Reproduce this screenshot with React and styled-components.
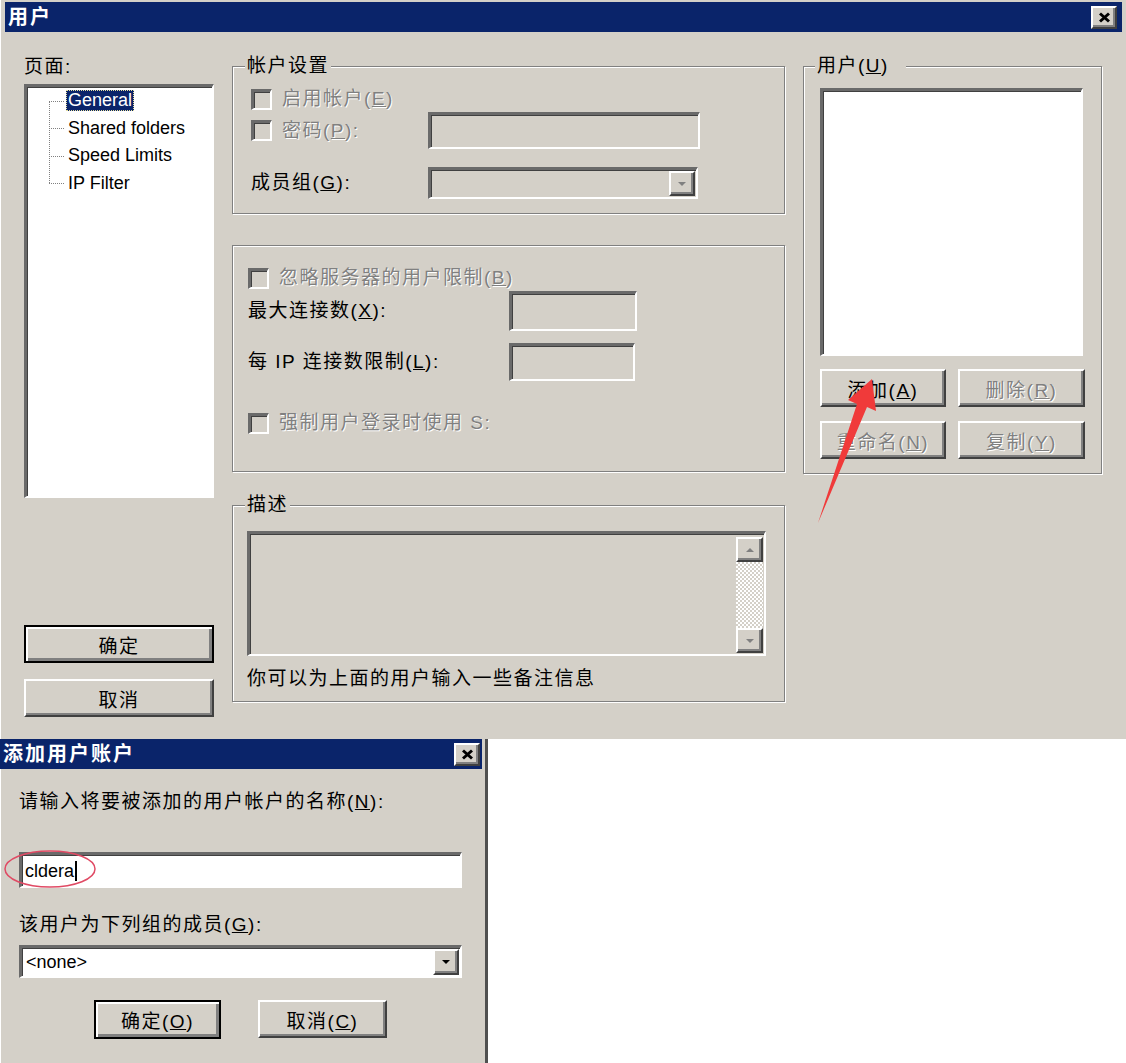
import React from 'react';
import styled, { createGlobalStyle, css } from 'styled-components';

const FACE = '#d4d0c8';
const NAVY = '#0a246a';

const GlobalStyle = createGlobalStyle`
  html, body { margin: 0; padding: 0; background: #fff; overflow: hidden; }
  body {
    font-family: "Liberation Sans", "Noto Sans CJK SC", sans-serif;
    font-size: 19px;
    color: #000;
  }
  * { box-sizing: border-box; }
`;

const sunken = css`
  border-style: solid;
  border-width: 3px 2px 2px 3px;
  border-color: #6a6a6a #fff #fff #6a6a6a;
  box-shadow: inset 1px 1px 0 #404040;
`;

const raised = css`
  border-style: solid;
  border-width: 2px;
  border-color: #fff #404040 #404040 #fff;
  box-shadow: inset -2px -2px 0 #808080;
`;

const dimText = css`
  color: #808080;
  text-shadow: 1px 1px 0 #fff;
`;

const Window = styled.div`
  position: relative;
  width: ${p => p.$w}px;
  height: ${p => p.$h}px;
  background: ${FACE};
  padding: ${p => p.$pad};
  display: flex;
  flex-direction: column;
  box-shadow: inset 1px 0 0 #fff;
  ${p => p.$edge && css`border-right: 3px solid #505050;`}
`;

const TitleBar = styled.div`
  flex: none;
  height: 30px;
  background: ${NAVY};
  display: flex;
  align-items: center;
  justify-content: space-between;
  padding: 0 ${p => p.$right}px 0 3px;
`;

const TitleText = styled.span`
  color: #fff;
  font-weight: bold;
  font-size: 20px;
  letter-spacing: 2px;
  line-height: 30px;
`;

const CloseButton = styled.div`
  width: 26px;
  height: 23px;
  background: ${FACE};
  ${raised}
  display: flex;
  align-items: center;
  justify-content: center;
`;

const MainBody = styled.div`
  flex: 1;
  display: grid;
  grid-template-columns: 190px 553px 299px;
  column-gap: 18px;
  align-items: start;
  padding: 24px 20px 0 19px;
`;

const Column = styled.div`
  display: flex;
  flex-direction: column;
`;

const Text = styled.span`
  display: inline-block;
  line-height: ${p => p.$lh || 22}px;
  letter-spacing: 1.5px;
  white-space: nowrap;
  ${p => p.$w && css`width: ${p.$w}px; flex: none;`}
  ${p => p.$dim && dimText}
`;

const Tree = styled.div`
  margin-top: 6px;
  height: 414px;
  background: #fff;
  ${sunken}
`;

const TreeList = styled.ul`
  position: relative;
  list-style: none;
  margin: 0;
  padding: 0 0 0 39px;
  &::before {
    content: '';
    position: absolute;
    left: 22px;
    top: 14px;
    bottom: 14px;
    border-left: 1px dotted #808080;
  }
`;

const TreeItem = styled.li`
  position: relative;
  height: 27.5px;
  display: flex;
  align-items: center;
  &::before {
    content: '';
    position: absolute;
    left: -17px;
    width: 15px;
    top: 50%;
    border-top: 1px dotted #808080;
  }
`;

const TreeLabel = styled.span`
  font-size: 18px;
  line-height: 21px;
  padding: 0 2px;
  ${p => p.$selected && css`
    background: ${NAVY};
    color: #fff;
    outline: 1px dotted #e8e0a0;
    outline-offset: -1px;
  `}
`;

const LeftButtons = styled.div`
  margin-top: 127px;
  display: flex;
  flex-direction: column;
  gap: 16px;
`;

const PushButton = styled.button`
  width: ${p => p.$w}px;
  height: ${p => p.$h || 38}px;
  padding: 0;
  font: inherit;
  font-size: 19px;
  letter-spacing: 1.5px;
  color: #000;
  background: ${FACE};
  ${raised}
  ${p => p.$default && css`
    border: 2px solid #000;
    box-shadow: inset 2px 2px 0 #fff, inset -3px -3px 0 #808080;
  `}
  &:disabled { ${dimText} }
`;

const Group = styled.div`
  position: relative;
  margin-top: ${p => p.$mt}px;
  height: ${p => p.$h}px;
  padding: ${p => p.$pad};
  border: 1px solid #808080;
  box-shadow: inset 1px 1px 0 #fff, 1px 1px 0 #fff;
`;

const Legend = styled.span`
  position: absolute;
  top: -12px;
  left: ${p => p.$left || 12}px;
  padding: 0 ${p => p.$padR || 2}px 0 2px;
  background: ${FACE};
  line-height: 22px;
  letter-spacing: 1.5px;
`;

const CheckRow = styled.div`
  display: flex;
  align-items: center;
  gap: 10px;
  height: 22px;
  margin-top: ${p => p.$mt || 0}px;
  ${p => p.$w && css`width: ${p.$w}px; flex: none;`}
`;

const CheckBox = styled.span`
  flex: none;
  width: 21px;
  height: 21px;
  background: ${FACE};
  ${sunken}
`;

const FieldRow = styled.div`
  display: flex;
  align-items: center;
  margin-top: ${p => p.$mt || 0}px;
`;

const Field = styled.div`
  flex: none;
  width: ${p => p.$w}px;
  height: ${p => p.$h}px;
  background: ${p => (p.$white ? '#fff' : FACE)};
  ${sunken}
`;

const Combo = styled(Field)`
  display: flex;
  align-items: stretch;
  justify-content: space-between;
  padding: 1px 1px 1px 0;
`;

const ComboValue = styled.span`
  font-size: 18px;
  line-height: 26px;
  padding-left: 4px;
`;

const DropButton = styled.span`
  flex: none;
  width: 26px;
  background: ${FACE};
  ${raised}
  display: flex;
  align-items: center;
  justify-content: center;
`;

const Arrow = styled.span`
  width: 0;
  height: 0;
  border-left: 4px solid transparent;
  border-right: 4px solid transparent;
  ${p => (p.$up
    ? css`border-bottom: 4px solid ${p.$color};`
    : css`border-top: 4px solid ${p.$color};`)}
`;

const TextArea = styled.div`
  width: 519px;
  height: 125px;
  background: ${FACE};
  ${sunken}
  display: flex;
  justify-content: flex-end;
  padding: 3px 1px 1px 0;
`;

const ScrollBar = styled.div`
  width: 27px;
  display: flex;
  flex-direction: column;
`;

const ScrollArrow = styled.span`
  flex: none;
  height: 25px;
  background: ${FACE};
  ${raised}
  display: flex;
  align-items: center;
  justify-content: center;
`;

const ScrollTrack = styled.span`
  flex: 1;
  background-color: #fff;
  background-image: conic-gradient(${FACE} 25%, #fff 0 50%, ${FACE} 0 75%, #fff 0);
  background-size: 4px 4px;
`;

const Note = styled(Text)`
  margin-top: 11px;
  line-height: 24px;
`;

const UserList = styled.div`
  width: 263px;
  height: 268px;
  background: #fff;
  ${sunken}
`;

const ButtonGrid = styled.div`
  margin-top: 13px;
  display: grid;
  grid-template-columns: 126px 127px;
  column-gap: 12px;
  row-gap: 14px;
`;

const Overlay = styled.svg`
  position: absolute;
  left: 0;
  top: 0;
  pointer-events: none;
  overflow: visible;
`;

const DialogBody = styled.div`
  display: flex;
  flex-direction: column;
  align-items: flex-start;
  padding: 22px 0 0 19px;
`;

const NameInput = styled(Field)`
  position: relative;
  margin-top: 39px;
  display: flex;
  align-items: center;
  padding-left: 3px;
`;

const InputText = styled.span`
  font-size: 18px;
  line-height: 22px;
`;

const Caret = styled.span`
  width: 2px;
  height: 20px;
  margin-left: 1px;
  background: #000;
`;

const DialogButtons = styled.div`
  margin-top: 22px;
  padding-left: 75px;
  display: flex;
  align-items: flex-start;
  gap: 37px;
`;

const CloseX = () => (
  <svg width="13" height="11" viewBox="0 0 13 11">
    <path d="M2 1.5 L11 9.5 M11 1.5 L2 9.5" stroke="#000" strokeWidth="3" />
  </svg>
);

const pages = ['General', 'Shared folders', 'Speed Limits', 'IP Filter'];

export default function App() {
  return (
    <>
      <GlobalStyle />
      <Window $w={1126} $h={739} $pad="2px 4px 0 5px">
        <TitleBar $right={5}>
          <TitleText>用户</TitleText>
          <CloseButton><CloseX /></CloseButton>
        </TitleBar>
        <MainBody>
          <Column>
            <Text>页面:</Text>
            <Tree>
              <TreeList>
                {pages.map((p, i) => (
                  <TreeItem key={p}>
                    <TreeLabel $selected={i === 0}>{p}</TreeLabel>
                  </TreeItem>
                ))}
              </TreeList>
            </Tree>
            <LeftButtons>
              <PushButton $w={190} $default>确定</PushButton>
              <PushButton $w={190}>取消</PushButton>
            </LeftButtons>
          </Column>

          <Column>
            <Group $mt={10} $h={148} $pad="21px 0 0 18px">
              <Legend>帐户设置</Legend>
              <CheckRow>
                <CheckBox />
                <Text $dim>启用帐户(<u>E</u>)</Text>
              </CheckRow>
              <FieldRow $mt={2}>
                <CheckRow $w={177}>
                  <CheckBox />
                  <Text $dim>密码(<u>P</u>):</Text>
                </CheckRow>
                <Field $w={272} $h={37} />
              </FieldRow>
              <FieldRow $mt={18}>
                <Text $w={177}>成员组(<u>G</u>):</Text>
                <Combo $w={270} $h={32}>
                  <ComboValue />
                  <DropButton><Arrow $color="#808080" /></DropButton>
                </Combo>
              </FieldRow>
            </Group>

            <Group $mt={31} $h={227} $pad="21px 0 0 15px">
              <CheckRow>
                <CheckBox />
                <Text $dim>忽略服务器的用户限制(<u>B</u>)</Text>
              </CheckRow>
              <FieldRow $mt={2}>
                <Text $w={261}>最大连接数(<u>X</u>):</Text>
                <Field $w={128} $h={40} />
              </FieldRow>
              <FieldRow $mt={12}>
                <Text $w={261}>每 IP 连接数限制(<u>L</u>):</Text>
                <Field $w={126} $h={38} />
              </FieldRow>
              <CheckRow $mt={31}>
                <CheckBox />
                <Text $dim>强制用户登录时使用 S:</Text>
              </CheckRow>
            </Group>

            <Group $mt={33} $h={197} $pad="25px 0 0 14px">
              <Legend>描述</Legend>
              <TextArea>
                <ScrollBar>
                  <ScrollArrow><Arrow $up $color="#808080" /></ScrollArrow>
                  <ScrollTrack />
                  <ScrollArrow><Arrow $color="#808080" /></ScrollArrow>
                </ScrollBar>
              </TextArea>
              <Note>你可以为上面的用户输入一些备注信息</Note>
            </Group>
          </Column>

          <Column>
            <Group $mt={10} $h={408} $pad="21px 0 0 16px">
              <Legend $left={11} $padR={17}>用户(<u>U</u>)</Legend>
              <UserList />
              <ButtonGrid>
                <PushButton $w={126}>添加(<u>A</u>)</PushButton>
                <PushButton $w={127} disabled>删除(<u>R</u>)</PushButton>
                <PushButton $w={126} disabled>重命名(<u>N</u>)</PushButton>
                <PushButton $w={127} disabled>复制(<u>Y</u>)</PushButton>
              </ButtonGrid>
            </Group>
          </Column>
        </MainBody>

        <Overlay width="1126" height="739">
          <polygon
            points="872,379 876,411 867,407 818,523 857,404 848,400"
            fill="#f03a3a"
          />
        </Overlay>
      </Window>

      <Window $w={488} $h={324} $pad="0 3px 0 0" $edge>
        <TitleBar $right={2}>
          <TitleText>添加用户账户</TitleText>
          <CloseButton><CloseX /></CloseButton>
        </TitleBar>
        <DialogBody>
          <Text>请输入将要被添加的用户帐户的名称(<u>N</u>):</Text>
          <NameInput $w={443} $h={36} $white>
            <InputText>cldera</InputText>
            <Caret />
            <Overlay width="96" height="42" style={{ left: -20, top: -7 }}>
              <ellipse cx="48" cy="21" rx="45" ry="18" fill="none" stroke="#e04a64" strokeWidth="1.5" />
            </Overlay>
          </NameInput>
          <Text style={{ marginTop: 26 }}>该用户为下列组的成员(<u>G</u>):</Text>
          <Combo $w={443} $h={33} $white style={{ marginTop: 9 }}>
            <ComboValue>&lt;none&gt;</ComboValue>
            <DropButton><Arrow $color="#000" /></DropButton>
          </Combo>
          <DialogButtons>
            <PushButton $w={127} $h={39} $default>确定(<u>O</u>)</PushButton>
            <PushButton $w={129}>取消(<u>C</u>)</PushButton>
          </DialogButtons>
        </DialogBody>
      </Window>
    </>
  );
}
